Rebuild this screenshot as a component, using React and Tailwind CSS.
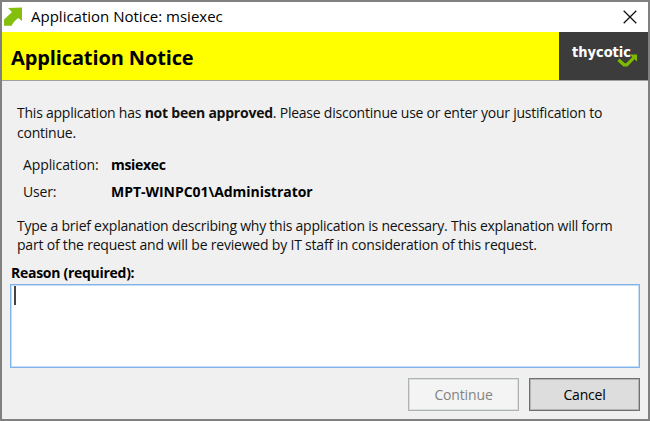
function ArrowIcon() {
  return (
    <svg className="block h-[20px] w-[20px]" viewBox="0 0 20 20">
      <path d="M5.2 1L19 0.6V14L15.3 11C11.5 13.5 10 16 8.6 18.8H1V12.4L8 6L9 5.2L5.2 1Z" fill="#84bf0c" />
    </svg>
  );
}

function Logo() {
  return (
    <svg className="block h-[48px] w-[89px]" viewBox="0 0 89 48">
      <text x="13" y="25" fill="#fff" textLength="59" lengthAdjust="spacingAndGlyphs" className="font-['DejaVu_Sans'] text-[13.5px] font-bold">
        thycotic
      </text>
      <path d="M59.5 27.5L65 32.8H67.8L76 24.5" stroke="#3c3c3c" strokeWidth="5" fill="none" />
      <path d="M59.5 27.8L65 32.8H67.8L76 24.5" stroke="#7fba00" strokeWidth="3.2" fill="none" />
      <path d="M70.5 22.5H78V29.5Z" fill="#7fba00" />
    </svg>
  );
}

export default function App() {
  return (
    <div className="flex h-[421px] w-[650px] flex-col border-2 border-[#808080] bg-[#f0f0f0] font-['Open_Sans',sans-serif] text-[14px] text-[#111]">
      <header className="flex h-[30px] shrink-0 items-center bg-white">
        <div className="ml-[1px] w-[28px]"><ArrowIcon /></div>
        <h1 className="flex-1 whitespace-nowrap pb-[2px] text-[15px] leading-[20px] text-black">Application Notice: msiexec</h1>
        <svg className="mr-[11px] mb-[1px] block h-[14px] w-[14px]" viewBox="0 0 14 14">
          <path d="M0.7 0.7L13.3 13.3M13.3 0.7L0.7 13.3" stroke="#111" strokeWidth="1.3" />
        </svg>
      </header>

      <section className="flex h-[49px] shrink-0 border-b border-[#a0a0a0] bg-[#ffff00]">
        <h2 className="flex-1 whitespace-nowrap pl-[9px] pt-[2px] text-[20px] font-bold leading-[48px] tracking-[-0.12px] text-black">Application Notice</h2>
        <div className="w-[89px] shrink-0 overflow-hidden bg-[#3c3c3c]"><Logo /></div>
      </section>

      <main className="flex flex-1 flex-col pl-[8px] pr-[8px]">
        <div className="pl-[7px]">
          <p className="mt-[22px] whitespace-nowrap leading-[20px] tracking-[-0.23px]">
            This application has <b>not been approved</b>. Please discontinue use or enter your justification to
            <br />
            continue.
          </p>
          <dl className="mt-[8px] grid grid-cols-[88px_1fr] pl-[6px] leading-[27px]">
            <dt className="tracking-[-0.1px]">Application:</dt>
            <dd className="font-bold tracking-[-0.3px] text-black">msiexec</dd>
            <dt className="tracking-[-0.2px]">User:</dt>
            <dd className="font-bold tracking-[-0.04px] text-black">MPT-WINPC01\Administrator</dd>
          </dl>
          <p className="mt-[11px] whitespace-nowrap leading-[19px] tracking-[-0.24px]">
            Type a brief explanation describing why this application is necessary. This explanation will form
            <br />
            <span className="tracking-[-0.2px]">part of the request and will be reviewed by IT staff in consideration of this request.</span>
          </p>
        </div>
        <label className="mt-[9px] pl-[1px] font-bold leading-[20px] tracking-[-0.28px] text-black">Reason (required):</label>
        <div className="mt-[1px] h-[84px] border border-[#7eb4ea] bg-white pl-[3px] pt-[1px] shadow-[inset_0_0_0_1px_#c5ddf6]">
          <div className="h-[19px] w-[2px] bg-[#444]" />
        </div>
        <footer className="mt-[10px] flex justify-end gap-[10px] leading-[28px]">
          <button className="h-[33px] w-[111px] border border-[#adb2b5] bg-[#f4f4f4] tracking-[-0.15px] text-[#838383] shadow-[inset_0_0_0_1px_#dcdfe0]">Continue</button>
          <button className="h-[33px] w-[111px] border border-[#707070] bg-[#ddd] tracking-[-0.2px] text-black shadow-[inset_0_0_0_1px_#b4b4b4]">Cancel</button>
        </footer>
      </main>
    </div>
  );
}
